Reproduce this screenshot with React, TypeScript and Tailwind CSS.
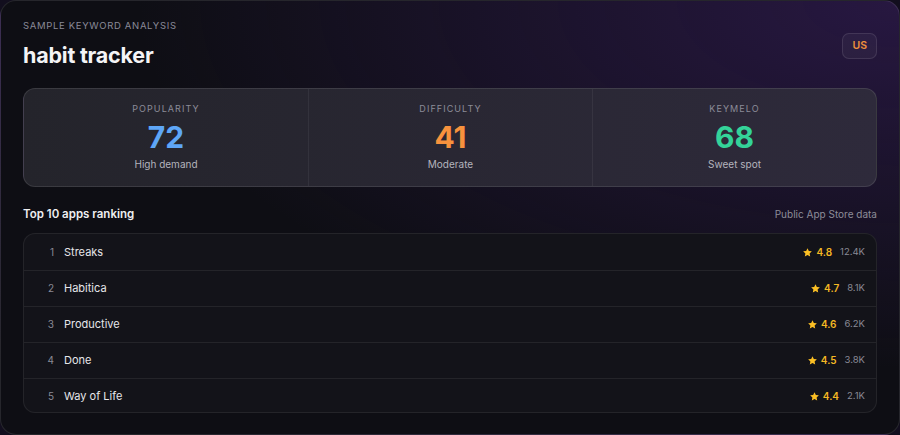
import React from 'react'

type App = { rank: number; name: string; rating: string; reviews: string }

const apps: App[] = [
  { rank: 1, name: 'Streaks', rating: '4.8', reviews: '12.4K' },
  { rank: 2, name: 'Habitica', rating: '4.7', reviews: '8.1K' },
  { rank: 3, name: 'Productive', rating: '4.6', reviews: '6.2K' },
  { rank: 4, name: 'Done', rating: '4.5', reviews: '3.8K' },
  { rank: 5, name: 'Way of Life', rating: '4.4', reviews: '2.1K' },
]

const stats = [
  { label: 'POPULARITY', value: '72', note: 'High demand', color: 'text-[#5ea6f7]' },
  { label: 'DIFFICULTY', value: '41', note: 'Moderate', color: 'text-[#f7923d]' },
  { label: 'KEYMELO', value: '68', note: 'Sweet spot', color: 'text-[#34d399]' },
]

const Star = () => (
  <svg viewBox="0 0 24 24" className="w-[11px] h-[11px] fill-[#fbbf24]">
    <path d="M12 2.5l2.9 6.1 6.6.8-4.9 4.6 1.3 6.6L12 17.3l-5.9 3.3 1.3-6.6-4.9-4.6 6.6-.8z" />
  </svg>
)

export default function App() {
  return (
    <div className="w-full h-screen bg-[#120e1e] font-['Inter',sans-serif]">
      <div className="h-full w-full rounded-[16px] border border-white/10 bg-[#0e0e14] bg-[radial-gradient(ellipse_at_top_right,rgba(70,35,120,0.45),rgba(14,14,20,0)_60%)] px-[22px] pt-[17px] pb-[21px] flex flex-col overflow-hidden">
        {/* header */}
        <div className="flex items-center justify-between">
          <div>
            <div className="text-[9.5px] leading-4 tracking-[0.07em] text-[#8a8a98]">SAMPLE KEYWORD ANALYSIS</div>
            <div className="mt-[7px] text-[21.5px] leading-[28px] font-bold text-[#f4f4f6] tracking-[-0.01em]">habit tracker</div>
          </div>
          <div className="mt-[4px] h-[26px] px-[9px] rounded-[7px] border border-white/10 bg-white/[0.04] flex items-center text-[10.5px] font-semibold text-[#ef8f3c]">
            US
          </div>
        </div>

        {/* stats */}
        <div className="mt-[19px] grid grid-cols-3 rounded-[12px] border border-white/10 bg-linear-to-r from-[#24242b] to-[#2e2a3b]">
          {stats.map((s, i) => (
            <div
              key={s.label}
              className={`flex flex-col items-center pt-[13px] pb-[14px] ${i > 0 ? 'border-l border-white/[0.06]' : ''}`}
            >
              <div className="text-[9px] leading-[14px] tracking-[0.12em] text-[#8c8c98]">{s.label}</div>
              <div className={`mt-[3px] text-[30px] leading-[36px] font-bold ${s.color}`}>{s.value}</div>
              <div className="mt-[1px] text-[10px] leading-4 text-[#b4b4bd]">{s.note}</div>
            </div>
          ))}
        </div>

        {/* ranking header */}
        <div className="mt-[17px] flex items-center justify-between">
          <div className="text-[11.5px] leading-5 font-semibold text-[#eeeef1]">Top 10 apps ranking</div>
          <div className="text-[10px] leading-5 text-[#8d8d99]">Public App Store data</div>
        </div>

        {/* table */}
        <div className="mt-[9px] rounded-[12px] border border-white/[0.07] bg-[#131319] overflow-hidden">
          {apps.map((a, i) => (
            <div
              key={a.rank}
              className={`h-[36px] flex items-center justify-between pl-[18px] pr-[11px] ${i > 0 ? 'border-t border-white/[0.07]' : ''}`}
            >
              <div className="flex items-center gap-[10px]">
                <span className="w-[12px] text-right text-[10px] text-[#8a8a96]">{a.rank}</span>
                <span className="text-[11px] text-[#e6e6ea]">{a.name}</span>
              </div>
              <div className="flex items-center gap-[8px]">
                <div className="flex items-center gap-[3px]">
                  <Star />
                  <span className="text-[10px] font-semibold text-[#f5b823]">{a.rating}</span>
                </div>
                <span className="text-[9.5px] text-[#8a8a96]">{a.reviews}</span>
              </div>
            </div>
          ))}
        </div>
      </div>
    </div>
  )
}
